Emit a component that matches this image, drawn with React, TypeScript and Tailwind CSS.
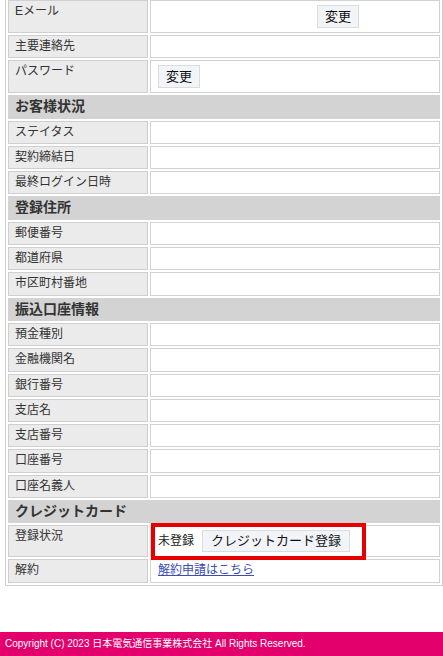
import type { ReactNode } from "react";

const labelCell =
    "w-[140px] border border-[#cfcfcf] bg-[#ebebeb] px-[6px] py-[2px] align-top text-[12px] leading-[17.3px] text-[#333]";
const valueCell = "border border-[#d2d2d2] bg-white px-[7px] align-top text-[12px] leading-[17.3px] text-[#222]";
const btn =
    "h-[23px] border border-[#dcdcdc] bg-[#f1f4f8] px-[7px] text-[13px] leading-[21px] text-[#111]";

function Row({ label, children, padded }: { label: string; children?: ReactNode; padded?: boolean }) {
    return (
        <tr>
            <td className={labelCell}>{label}</td>
            <td className={`${valueCell} ${padded ? "py-[4px]" : "py-[2px]"}`}>{children}</td>
        </tr>
    );
}

function Section({ title }: { title: string }) {
    return (
        <tr>
            <td
                colSpan={2}
                className="border border-[#d3d3d3] bg-[#d3d3d3] px-[6px] py-[2px] text-[14px] font-bold leading-[17.3px] text-[#333]"
            >
                {title}
            </td>
        </tr>
    );
}

export default function App() {
    return (
        <div
            className="min-h-[656px] bg-white"
            style={{ fontFamily: '"Liberation Sans", "Noto Sans CJK JP", sans-serif' }}
        >
            <div className="pl-[5px]">
                <table className="mt-[-3px] w-[438px] table-fixed border-separate border-spacing-[2px] border border-[#cfcfcf]">
                    <tbody>
                        <Row label="Eメール" padded>
                            <span className="inline-block w-[159px]" />
                            <button className={btn}>変更</button>
                        </Row>
                        <Row label="主要連絡先" />
                        <Row label="パスワード" padded>
                            <button className={btn}>変更</button>
                        </Row>

                        <Section title="お客様状況" />
                        <Row label="ステイタス" />
                        <Row label="契約締結日" />
                        <Row label="最終ログイン日時" />

                        <Section title="登録住所" />
                        <Row label="郵便番号" />
                        <Row label="都道府県" />
                        <Row label="市区町村番地" />

                        <Section title="振込口座情報" />
                        <Row label="預金種別" />
                        <Row label="金融機関名" />
                        <Row label="銀行番号" />
                        <Row label="支店名" />
                        <Row label="支店番号" />
                        <Row label="口座番号" />
                        <Row label="口座名義人" />

                        <Section title="クレジットカード" />
                        <tr>
                            <td className={labelCell}>登録状況</td>
                            <td className={`${valueCell} relative py-[4px]`}>
                                <div className="flex items-center gap-[8px]">
                                    <span className="text-[12px] text-[#222]">未登録</span>
                                    <button className="h-[22px] border border-[#dcdcdc] bg-[#f1f4f8] px-[8px] text-[13px] leading-[20px] text-[#111]">
                                        クレジットカード登録
                                    </button>
                                </div>
                                <div className="pointer-events-none absolute left-0 top-[-3px] h-[37px] w-[215px] border-4 border-[#e60000]" />
                            </td>
                        </tr>
                        <Row label="解約">
                            <a href="#" className="text-[#3b4cb4] underline">
                                解約申請はこちら
                            </a>
                        </Row>
                    </tbody>
                </table>
            </div>

            <footer className="mt-[46px] flex h-[24px] items-center bg-[#e3006d] pl-[5px] text-[10px] text-white">
                Copyright (C) 2023 日本電気通信事業株式会社 All Rights Reserved.
            </footer>
        </div>
    );
}
